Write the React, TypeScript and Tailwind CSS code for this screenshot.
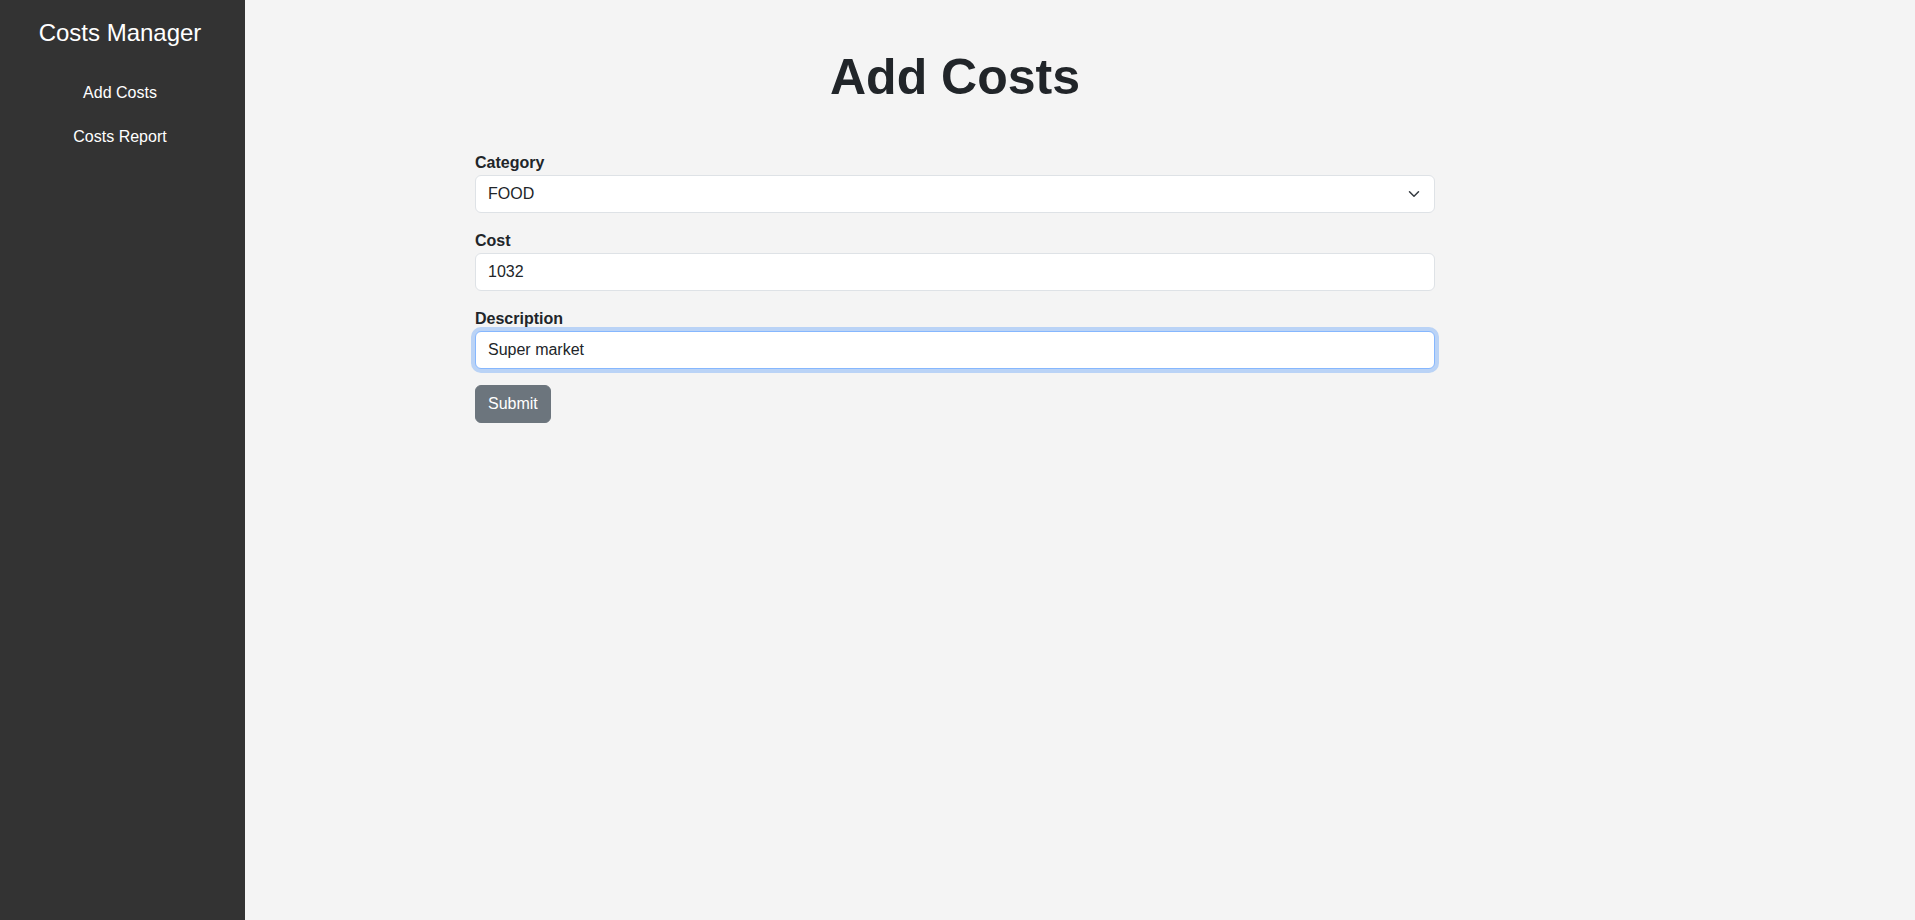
import { useState } from "react";

const categories = ["FOOD", "HEALTH", "EDUCATION", "TRAVEL", "HOUSING", "OTHER"];

function Sidebar() {
  return (
    <aside className="w-[245px] flex-none bg-[#333333] text-white pt-[19px] pr-[5px] flex flex-col items-center">
      <h2 className="text-[24px] leading-[28px] font-normal">Costs Manager</h2>
      <nav className="mt-[34px] flex flex-col items-center gap-[20px]">
        <a className="text-[16px] leading-[24px] text-white cursor-pointer">Add Costs</a>
        <a className="text-[16px] leading-[24px] text-white cursor-pointer">Costs Report</a>
      </nav>
    </aside>
  );
}

export default function App() {
  const [category, setCategory] = useState("FOOD");
  const [cost, setCost] = useState("1032");
  const [description, setDescription] = useState("Super market");

  return (
    <div
      className="flex h-[920px] min-h-screen bg-[#f4f4f4] text-[#212529]"
      style={{ fontFamily: '"Liberation Sans", Arial, sans-serif' }}
    >
      <Sidebar />
      <main className="flex-1">
        <div className="ml-[230px] w-[960px] pt-[47px]">
          <h1 className="text-center text-[50px] leading-[1.2] font-bold">Add Costs</h1>
          <form className="mt-[44px] flex flex-col" onSubmit={(e) => e.preventDefault()}>
            <label className="block text-[16px] leading-[24px] font-bold">Category</label>
            <div className="relative mb-[16px]">
              <select
                className="block w-full h-[38px] appearance-none bg-white border border-[#dee2e6] rounded-[6px] pl-[12px] pr-[36px] text-[16px] leading-[24px] text-[#212529] outline-none"
                value={category}
                onChange={(e) => setCategory(e.target.value)}
              >
                {categories.map((c) => (
                  <option key={c} value={c}>{c}</option>
                ))}
              </select>
              <svg
                className="absolute right-[15px] top-[13px] pointer-events-none"
                width="12"
                height="12"
                viewBox="0 0 16 16"
                fill="none"
                stroke="#343a40"
                strokeWidth="2"
                strokeLinecap="round"
                strokeLinejoin="round"
              >
                <path d="m2 5 6 6 6-6" />
              </svg>
            </div>

            <label className="block text-[16px] leading-[24px] font-bold">Cost</label>
            <input
              className="block w-full h-[38px] mb-[16px] bg-white border border-[#dee2e6] rounded-[6px] px-[12px] text-[16px] leading-[24px] text-[#212529] outline-none"
              type="number"
              value={cost}
              onChange={(e) => setCost(e.target.value)}
            />

            <label className="block text-[16px] leading-[24px] font-bold">Description</label>
            <input
              className="block w-full h-[38px] mb-[16px] bg-white border border-[#86b7fe] rounded-[6px] px-[12px] text-[16px] leading-[24px] text-[#212529] outline-none shadow-[0_0_0_4px_rgba(13,110,253,0.25)]"
              type="text"
              value={description}
              onChange={(e) => setDescription(e.target.value)}
            />

            <div>
              <button
                type="submit"
                className="h-[38px] px-[12px] bg-[#6c757d] border border-[#6c757d] rounded-[6px] text-white text-[16px] leading-[24px]"
              >
                Submit
              </button>
            </div>
          </form>
        </div>
      </main>
    </div>
  );
}
